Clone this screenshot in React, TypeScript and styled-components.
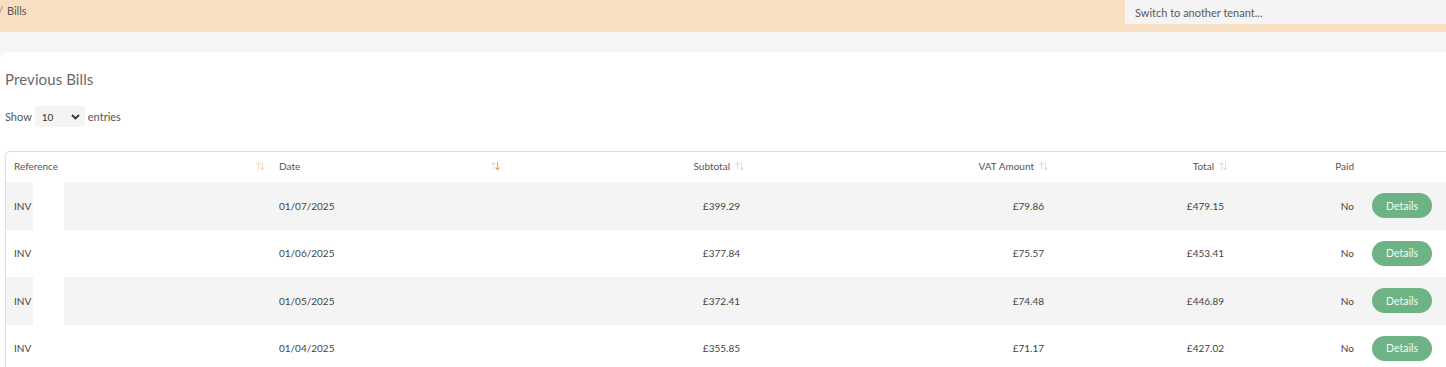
import React from "react";
import styled, { createGlobalStyle } from "styled-components";

const Global = createGlobalStyle`
  html, body { margin: 0; padding: 0; background: #f5f5f5; overflow: hidden; }
  body { font-family: Lato, "Noto Sans", sans-serif; color: #333; width: 1446px; height: 367px; }
  * { box-sizing: border-box; }
`;

const TopBar = styled.header`
  display: flex;
  justify-content: space-between;
  align-items: flex-start;
  height: 32px;
  background: #f8dfc2;
  width: 1446px;
`;

const Crumbs = styled.div`
  display: flex;
  gap: 4px;
  padding-top: 4px;
  margin-left: -2px;
  font-size: 11px;
  color: #555;
`;

const Sep = styled.span`
  color: #888;
`;

const TenantInput = styled.input`
  width: 321px;
  height: 24px;
  border: none;
  background: #f4f4f4;
  padding: 0 10px;
  font-family: inherit;
  font-size: 11px;
  color: #555;
  outline: none;
  &::placeholder { color: #5a5a5a; }
`;

const Card = styled.section`
  margin-top: 20px;
  width: 1470px;
  background: #fff;
  border-top-left-radius: 6px;
  padding: 18px 0 0 5px;
  height: 315px;
`;

const Title = styled.h2`
  margin: 0;
  font-size: 15px;
  font-weight: 400;
  color: #6a6a6a;
  letter-spacing: 0.1px;
`;

const LengthRow = styled.div`
  display: flex;
  align-items: center;
  gap: 3px;
  margin-top: 18px;
  font-size: 11px;
  color: #555;
`;

const SelectBox = styled.div`
  display: flex;
  align-items: center;
  justify-content: space-between;
  width: 50px;
  height: 21px;
  background: #f4f4f4;
  border-radius: 3px;
  padding: 0 5px 0 7px;
  font-size: 10px;
  color: #333;
`;

const TableWrap = styled.div`
  position: relative;
  margin-top: 24px;
  border: 1px solid #ddd;
  border-right: none;
  border-bottom: none;
  border-top-left-radius: 5px;
  overflow: hidden;
`;

const Table = styled.table`
  border-collapse: collapse;
  width: 1460px;
  table-layout: fixed;
  font-size: 10px;
`;

const Th = styled.th<{ $align?: "left" | "right" }>`
  position: relative;
  height: 30px;
  font-weight: 400;
  color: #555;
  text-align: ${(p) => p.$align || "left"};
  padding: 0 ${(p) => (p.$align === "right" ? "20px" : "10px")} 2px 8px;
`;

const Row = styled.tr<{ $striped?: boolean }>`
  background: ${(p) => (p.$striped ? "#f4f4f4" : "#fff")};
  height: 47.5px;
`;

const Td = styled.td<{ $align?: "left" | "right" }>`
  text-align: ${(p) => p.$align || "left"};
  padding: 0 10px 0 8px;
  color: #444;
  vertical-align: middle;
`;

const SortHolder = styled.span`
  position: absolute;
  right: 6px;
  top: 50%;
  transform: translateY(-60%);
  display: flex;
`;

const DetailsButton = styled.button`
  width: 60px;
  height: 25px;
  border: none;
  border-radius: 13px;
  background: #6db386;
  color: #f4fbf2;
  font-family: inherit;
  font-size: 10.5px;
  padding: 0;
`;

const Patch = styled.div`
  position: absolute;
  left: 27px;
  top: 30px;
  width: 31px;
  height: 143px;
  background: #fff;
`;

const SortIcon = ({ active }: { active?: "down" }) => (
  <SortHolder>
    <svg width="9" height="9" viewBox="0 0 9 9">
      <g fill="none" strokeWidth="1.1" strokeLinecap="round">
        <path d="M2.5 8V1M0.8 2.7L2.5 1L4.2 2.7" stroke="#f8dcc4" />
        <path
          d="M6.5 1V8M4.8 6.3L6.5 8L8.2 6.3"
          stroke={active === "down" ? "#f0a35c" : "#f8dcc4"}
        />
      </g>
    </svg>
  </SortHolder>
);

const Chevron = () => (
  <svg width="9" height="6" viewBox="0 0 9 6">
    <path d="M1 1L4.5 4.5L8 1" fill="none" stroke="#333" strokeWidth="1.8" />
  </svg>
);

const bills = [
  { date: "01/07/2025", sub: "£399.29", vat: "£79.86", total: "£479.15" },
  { date: "01/06/2025", sub: "£377.84", vat: "£75.57", total: "£453.41" },
  { date: "01/05/2025", sub: "£372.41", vat: "£74.48", total: "£446.89" },
  { date: "01/04/2025", sub: "£355.85", vat: "£71.17", total: "£427.02" },
];

export default function App() {
  return (
    <>
      <Global />
      <TopBar>
        <Crumbs>
          <Sep>/</Sep>
          <span>Bills</span>
        </Crumbs>
        <TenantInput placeholder="Switch to another tenant..." />
      </TopBar>
      <Card>
        <Title>Previous Bills</Title>
        <LengthRow>
          <span>Show</span>
          <SelectBox>
            <span>10</span>
            <Chevron />
          </SelectBox>
          <span>entries</span>
        </LengthRow>
        <TableWrap>
          <Table>
            <colgroup>
              <col style={{ width: 265 }} />
              <col style={{ width: 235 }} />
              <col style={{ width: 244 }} />
              <col style={{ width: 304 }} />
              <col style={{ width: 180 }} />
              <col style={{ width: 130 }} />
              <col />
            </colgroup>
            <thead>
              <tr>
                <Th>
                  Reference
                  <SortIcon />
                </Th>
                <Th>
                  Date
                  <SortIcon active="down" />
                </Th>
                <Th $align="right">
                  Subtotal
                  <SortIcon />
                </Th>
                <Th $align="right">
                  VAT Amount
                  <SortIcon />
                </Th>
                <Th $align="right">
                  Total
                  <SortIcon />
                </Th>
                <Th $align="right" style={{ paddingRight: 10 }}>
                  Paid
                </Th>
                <Th />
              </tr>
            </thead>
            <tbody>
              {bills.map((b, i) => (
                <Row key={b.date} $striped={i % 2 === 0}>
                  <Td>INV</Td>
                  <Td>{b.date}</Td>
                  <Td $align="right">{b.sub}</Td>
                  <Td $align="right">{b.vat}</Td>
                  <Td $align="right">{b.total}</Td>
                  <Td $align="right">No</Td>
                  <Td>
                    <DetailsButton>Details</DetailsButton>
                  </Td>
                </Row>
              ))}
            </tbody>
          </Table>
          <Patch />
        </TableWrap>
      </Card>
    </>
  );
}
